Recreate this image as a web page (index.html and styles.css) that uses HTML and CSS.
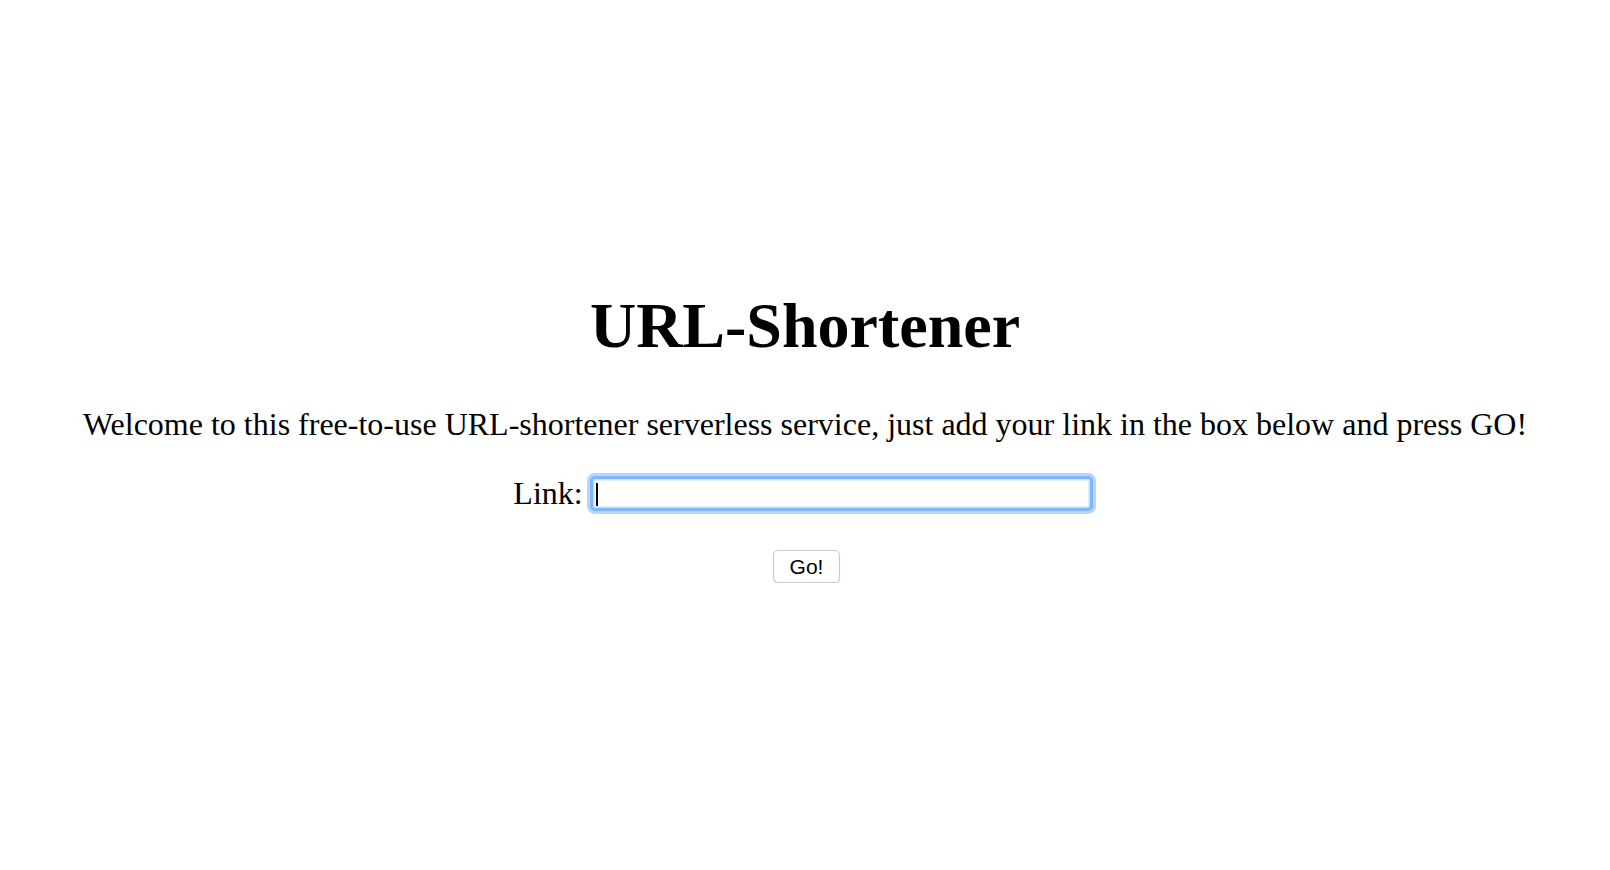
FILE: index.html
```html
<!DOCTYPE html>
<html lang="en">
<head>
<meta charset="utf-8">
<title>URL-Shortener</title>
<link rel="stylesheet" href="styles.css">
</head>
<body>
<main class="page">
  <h1 class="title">URL-Shortener</h1>
  <p class="intro">Welcome to this free-to-use URL-shortener serverless service, just add your link in the box below and press GO!</p>
  <form class="form">
    <div class="row">
      <label class="label" for="link">Link:</label>
      <span class="field">
        <input class="input" id="link" type="text">
        <span class="caret"></span>
      </span>
    </div>
    <div class="actions">
      <button class="btn" type="button">Go!</button>
    </div>
  </form>
</main>
</body>
</html>
```

FILE: styles.css
```css
html, body {
  margin: 0;
  padding: 0;
  background: #ffffff;
}

body {
  font-family: "Liberation Serif", "Times New Roman", serif;
  font-size: 32px;
  color: #000000;
}

.page {
  padding-top: 246px;
  text-align: center;
}

.title {
  font-size: 64px;
  font-weight: bold;
  margin: 0.67em 0;
  line-height: normal;
}

.intro {
  margin: 32px 0 0;
  line-height: normal;
}

.form {
  margin: 0;
}

.row {
  margin-top: 32px;
  display: flex;
  justify-content: center;
  align-items: center;
  gap: 7px;
  padding-right: 4px;
}

.label {
  line-height: normal;
}

.field {
  position: relative;
  display: block;
}

.input {
  display: block;
  box-sizing: border-box;
  width: 503px;
  height: 35px;
  margin: 0;
  padding: 0 6px;
  border: 3px solid #80b6f6;
  border-radius: 5px;
  background: #ffffff;
  box-shadow: 0 0 0 3px #b6d5fa, inset 0 0 0 1.5px #c6ddfb;
  outline: none;
  font-family: "Liberation Sans", Arial, sans-serif;
  font-size: 20px;
}

.caret {
  position: absolute;
  left: 6px;
  top: 7px;
  width: 2px;
  height: 23px;
  background: #000000;
}

.actions {
  margin-top: 38px;
  display: flex;
  justify-content: center;
  padding-left: 3px;
}

.btn {
  box-sizing: border-box;
  width: 67px;
  height: 33px;
  margin: 0;
  padding: 0;
  background: #ffffff;
  border: 1px solid #cacaca;
  border-radius: 5px;
  box-shadow: 0 1px 1px rgba(0, 0, 0, 0.14);
  font-family: "Liberation Sans", Arial, sans-serif;
  font-size: 21px;
  color: #000000;
  line-height: 1;
}
```
